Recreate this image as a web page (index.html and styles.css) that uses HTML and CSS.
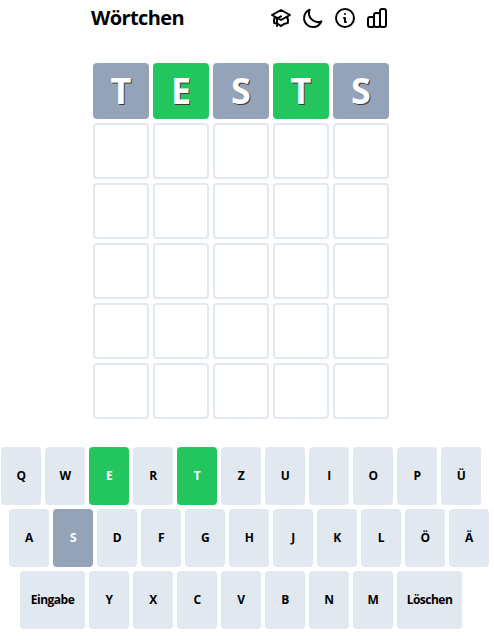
FILE: index.html
```html
<!DOCTYPE html>
<html lang="de">
<head>
<meta charset="utf-8">
<title>Wörtchen</title>
<link rel="stylesheet" href="styles.css">
</head>
<body>
<div class="app">
  <header class="header">
    <h1 class="title">Wörtchen</h1>
    <div class="icons">
      <svg class="icon" viewBox="0 0 24 24"><path d="M12 14l9-5-9-5-9 5 9 5zm0 0l6.16-3.422a12.083 12.083 0 01.665 6.479A11.952 11.952 0 0012 20.055a11.952 11.952 0 00-6.824-2.998 12.078 12.078 0 01.665-6.479L12 14zm-4 6v-7.5l4-2.222"/></svg>
      <svg class="icon" viewBox="0 0 24 24"><path d="M20.354 15.354A9 9 0 018.646 3.646 9.003 9.003 0 0012 21a9.003 9.003 0 008.354-5.646z"/></svg>
      <svg class="icon" viewBox="0 0 24 24"><path d="M13 16h-1v-4h-1m1-4h.01M21 12a9 9 0 11-18 0 9 9 0 0118 0z"/></svg>
      <svg class="icon" viewBox="0 0 24 24"><path d="M9 19v-6a2 2 0 00-2-2H5a2 2 0 00-2 2v6a2 2 0 002 2h2a2 2 0 002-2zm0 0V9a2 2 0 012-2h2a2 2 0 012 2v10m-6 0a2 2 0 002 2h2a2 2 0 002-2m0 0V5a2 2 0 012-2h2a2 2 0 012 2v14a2 2 0 01-2 2h-2a2 2 0 01-2-2z"/></svg>
    </div>
  </header>
  <main class="board">
    <div class="tile tile-absent">T</div>
    <div class="tile tile-correct">E</div>
    <div class="tile tile-absent">S</div>
    <div class="tile tile-correct">T</div>
    <div class="tile tile-absent">S</div>
    <div class="tile"></div><div class="tile"></div><div class="tile"></div><div class="tile"></div><div class="tile"></div>
    <div class="tile"></div><div class="tile"></div><div class="tile"></div><div class="tile"></div><div class="tile"></div>
    <div class="tile"></div><div class="tile"></div><div class="tile"></div><div class="tile"></div><div class="tile"></div>
    <div class="tile"></div><div class="tile"></div><div class="tile"></div><div class="tile"></div><div class="tile"></div>
    <div class="tile"></div><div class="tile"></div><div class="tile"></div><div class="tile"></div><div class="tile"></div>
  </main>
  <section class="keyboard">
    <div class="kb-row">
      <button class="key">Q</button><button class="key">W</button><button class="key key-correct">E</button><button class="key">R</button><button class="key key-correct">T</button><button class="key">Z</button><button class="key">U</button><button class="key">I</button><button class="key">O</button><button class="key">P</button><button class="key">Ü</button>
    </div>
    <div class="kb-row kb-row-shift">
      <button class="key">A</button><button class="key key-absent">S</button><button class="key">D</button><button class="key">F</button><button class="key">G</button><button class="key">H</button><button class="key">J</button><button class="key">K</button><button class="key">L</button><button class="key">Ö</button><button class="key">Ä</button>
    </div>
    <div class="kb-row">
      <button class="key key-wide">Eingabe</button><button class="key">Y</button><button class="key">X</button><button class="key">C</button><button class="key">V</button><button class="key">B</button><button class="key">N</button><button class="key">M</button><button class="key key-wide">Löschen</button>
    </div>
  </section>
</div>
</body>
</html>
```
FILE: styles.css
```css
* {
  box-sizing: border-box;
}

html,
body {
  margin: 0;
  padding: 0;
  background: #fff;
}

body {
  font-family: "Open Sans", "Noto Sans", sans-serif;
  color: #000;
}

.app {
  width: 482px;
  overflow: visible;
}

.header {
  display: flex;
  align-items: center;
  justify-content: space-between;
  width: 298px;
  height: 36px;
  margin-left: 91px;
}

.title {
  margin: 0;
  font-size: 20px;
  line-height: 28px;
  font-weight: 700;
  letter-spacing: -0.6px;
}

.icons {
  display: flex;
  gap: 8px;
}

.icon {
  display: block;
  width: 24px;
  height: 24px;
  fill: none;
  stroke: #000;
  stroke-width: 2;
  stroke-linecap: round;
  stroke-linejoin: round;
}

.board {
  display: grid;
  grid-template-columns: repeat(5, 56px);
  grid-auto-rows: 56px;
  gap: 4px;
  justify-content: center;
  margin-top: 27px;
}

.tile {
  display: flex;
  align-items: center;
  justify-content: center;
  border: 2px solid #e2e8f0;
  border-radius: 4px;
  font-size: 36px;
  font-weight: 700;
  line-height: 40px;
  color: #fff;
  text-shadow: 1px 1px 0 #3a3a3a;
}

.tile-absent {
  background: #94a3b8;
  border-color: #94a3b8;
}

.tile-correct {
  background: #22c55e;
  border-color: #22c55e;
}

.keyboard {
  display: flex;
  flex-direction: column;
  gap: 4px;
  margin-top: 28px;
}

.kb-row {
  display: flex;
  justify-content: center;
  gap: 4px;
}

.kb-row-shift {
  margin-left: 16px;
}

.key {
  flex: none;
  width: 40px;
  height: 58px;
  padding: 0;
  border: 0;
  border-radius: 4px;
  background: #e2e8f0;
  color: #000;
  font-family: inherit;
  font-size: 12px;
  font-weight: 700;
  line-height: 16px;
  letter-spacing: -0.5px;
}

.key-wide {
  width: 65px;
}

.key-correct {
  background: #22c55e;
  color: #fff;
}

.key-absent {
  background: #94a3b8;
  color: #fff;
}
```
